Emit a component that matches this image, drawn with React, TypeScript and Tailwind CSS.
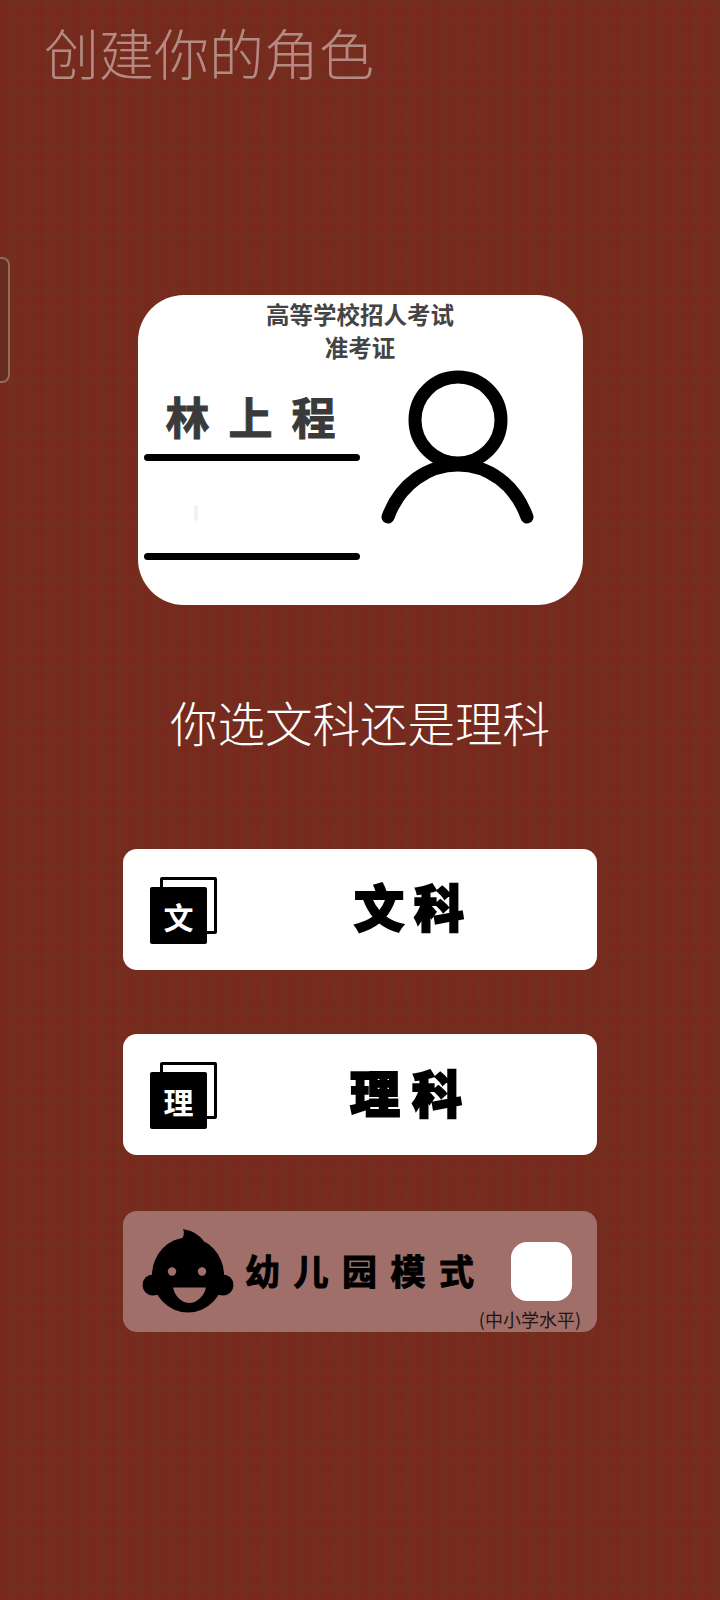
import React from "react";

const DocIcon = ({ label }: { label: string }) => (
  <div className="relative mt-[2px] h-[67px] w-[67px] shrink-0">
    <div className="ml-[10px] h-[57px] w-[57px] rounded-[2px] border-[3px] border-black bg-white" />
    <div className="absolute bottom-0 left-0 flex h-[57px] w-[57px] items-center justify-center rounded-[2px] bg-black text-[30px] font-bold leading-none text-white">
      {label}
    </div>
  </div>
);

const BabyIcon = () => (
  <svg width="92" height="86" viewBox="0 0 92 86" className="shrink-0" fill="black">
    <circle cx="11" cy="56" r="10.500" />
    <circle cx="81" cy="56" r="10.500" />
    <ellipse cx="46" cy="46" rx="36" ry="37.500" />
    <path d="M34 14 C42 10 43 5 41 0 C52 2 60 7 65 18 Z" />
    <circle cx="30" cy="42.500" r="4.200" fill="#a06f69" />
    <circle cx="60" cy="42.500" r="4.200" fill="#a06f69" />
    <path d="M31 58.500 H64 C62 68 54 74 47.500 74 C40 74 33 68 31 58.500 Z" fill="#a06f69" />
  </svg>
);

export default function App() {
  return (
    <div className="relative flex min-h-[1600px] flex-col items-center overflow-hidden bg-[#752b1e] bg-[repeating-linear-gradient(90deg,rgba(140,25,35,0.10)_0px,rgba(140,25,35,0.10)_8px,rgba(105,60,20,0.10)_8px,rgba(105,60,20,0.10)_18px),repeating-linear-gradient(0deg,rgba(140,25,35,0.07)_0px,rgba(140,25,35,0.07)_8px,rgba(105,60,20,0.07)_8px,rgba(105,60,20,0.07)_18px)] font-['Noto_Sans_CJK_SC',sans-serif]">
      <div className="absolute left-0 top-[257px] h-[126px] w-[10px] rounded-r-[8px] border-y-2 border-r-2 border-[#8e6f5c] bg-[#652a20]" />

      <h1 className="h-[106px] self-start pl-[44px] text-[55px] font-extralight leading-[102px] text-white/45">
        创建你的角色
      </h1>

      <section className="mt-[189px] h-[310px] w-[445px] rounded-[46px] bg-white pt-[3px] pl-[6px]">
        <div className="text-center text-[23.500px] font-bold leading-[33px] text-[#444]">
          <p className="pr-[6px]">高等学校招人考试</p>
          <p className="pr-[6px]">准考证</p>
        </div>
        <div className="flex">
          <div className="w-[216px]">
            <div className="flex h-[90px] items-end pb-[8px] pl-[22px] text-[44px] font-bold leading-[60px] tracking-[19px] text-[#3a3a3a] [-webkit-text-stroke:1px_#3a3a3a]">
              林上程
            </div>
            <div className="h-[7px] rounded-full bg-black" />
            <div className="flex h-[92px] items-center pl-[50px] pt-[12px]">
              <div className="h-[16px] w-[4px] rounded-full bg-[#f3f3f3]" />
            </div>
            <div className="h-[7px] rounded-full bg-black" />
          </div>
          <svg width="160" height="160" viewBox="0 0 160 160" className="ml-[18px] mt-[2px]" fill="none" stroke="black" strokeLinecap="round">
            <circle cx="80" cy="54" r="43" strokeWidth="13" />
            <path d="M10 151 C22 118 50 99 80 99 C110 99 137 118 149 151" strokeWidth="13" />
          </svg>
        </div>
      </section>

      <p className="mt-[87px] h-[60px] text-[47.500px] font-extralight leading-[60px] text-white">你选文科还是理科</p>

      <button className="mt-[97px] flex h-[121px] w-[474px] items-center rounded-[14px] bg-white pl-[27px]">
        <DocIcon label="文" />
        <span className="flex-1 pb-[10px] pl-[14px] text-center text-[50px] font-black leading-none tracking-[10px] text-black [-webkit-text-stroke:2px_black]">文科</span>
      </button>

      <button className="mt-[64px] flex h-[121px] w-[474px] items-center rounded-[14px] bg-white pl-[27px]">
        <DocIcon label="理" />
        <span className="flex-1 pb-[8px] pl-[10px] text-center text-[50px] font-black leading-none tracking-[12px] text-black [-webkit-text-stroke:2px_black]">理科</span>
      </button>

      <div className="relative mt-[56px] flex h-[121px] w-[474px] items-center rounded-[14px] bg-[#a06f69] pl-[19px]">
        <BabyIcon />
        <span className="ml-[11px] whitespace-nowrap pb-[4px] text-[35px] font-bold leading-none tracking-[13.500px] text-black [-webkit-text-stroke:1px_black]">幼儿园模式</span>
        <div className="absolute left-[388px] top-[31px] h-[59px] w-[61px] rounded-[16px] bg-white" />
        <span className="absolute bottom-[3px] right-[16px] whitespace-nowrap text-[18px] leading-[20px] text-[#1f1412]">(中小学水平)</span>
      </div>
    </div>
  );
}
